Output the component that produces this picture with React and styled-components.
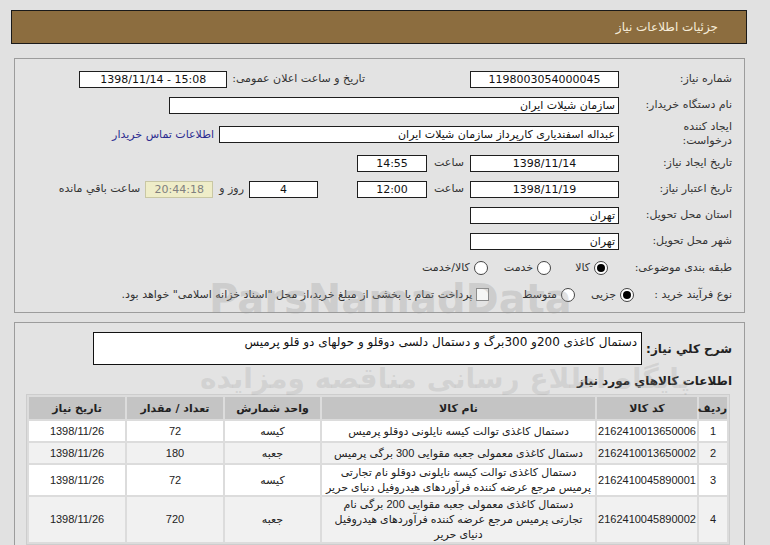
import React from "react";
import styled, { createGlobalStyle, css } from "styled-components";

const GlobalStyle = createGlobalStyle`
  html, body {
    margin: 0;
    padding: 0;
    background: #e1e1e1;
  }
  body {
    font-family: "DejaVu Sans", "Noto Sans", sans-serif;
    font-size: 11px;
    color: #222;
    direction: rtl;
  }
`;

const Page = styled.div`
  position: relative;
  width: 770px;
  height: 545px;
  overflow: hidden;
  box-sizing: border-box;
  padding: 10px 23px 0 11px;
`;

const Header = styled.div`
  height: 34px;
  box-sizing: border-box;
  display: flex;
  align-items: center;
  padding-right: 28px;
  background: #8c6d3f;
  border: 1px solid #1a1a1a;
  color: #f6ecd8;
  font-size: 12px;
`;

const Panel = styled.div`
  margin: ${(p) => p.$top || 14}px 2px 0 3px;
  border: 1px solid #9c9c9c;
  background: #e3e3e3;
  padding: ${(p) => p.$pad || "7px 12px 4px 8px"};
`;

const Row = styled.div`
  display: flex;
  align-items: center;
  height: ${(p) => p.$h || 26}px;
`;

const Label = styled.div`
  flex: none;
  width: ${(p) => (p.$w ? `${p.$w}px` : "auto")};
  margin-right: ${(p) => p.$mr || 0}px;
  color: #333;
  line-height: 14px;
  white-space: nowrap;
`;

const Field = styled.div`
  flex: none;
  width: ${(p) => p.$w}px;
  height: 17px;
  box-sizing: border-box;
  margin-right: ${(p) => p.$mr || 0}px;
  padding: 0 3px;
  border: 1px solid #1e1e1e;
  background: #fff;
  color: #111;
  line-height: 15px;
  text-align: ${(p) => (p.$right ? "right" : "center")};
  direction: ${(p) => (p.$right ? "rtl" : "ltr")};
  white-space: nowrap;
  overflow: hidden;
`;

const Timer = styled(Field)`
  background: #efedc8;
  border-color: #c9c7a4;
  color: #808080;
`;

const Link = styled.a`
  margin-right: 5px;
  color: #2b2b90;
  text-decoration: none;
  white-space: nowrap;
`;

const Option = styled.label`
  display: flex;
  align-items: center;
  gap: 4px;
  margin-right: ${(p) => p.$mr || 0}px;
  color: #333;
  white-space: nowrap;
`;

const Radio = styled.span`
  position: relative;
  flex: none;
  width: 14px;
  height: 14px;
  box-sizing: border-box;
  border-radius: 50%;
  border: 1px solid #444;
  background: #fff;
  ${(p) =>
    p.$checked &&
    css`
      &::after {
        content: "";
        position: absolute;
        inset: 2px;
        border-radius: 50%;
        background: #000;
      }
    `}
`;

const Check = styled.span`
  flex: none;
  width: 13px;
  height: 13px;
  box-sizing: border-box;
  border: 1px solid #8a8a8a;
  background: #f6f6f6;
`;

const DescRow = styled.div`
  display: flex;
  align-items: center;
`;

const BoldLabel = styled.div`
  flex: none;
  font-size: 12px;
  font-weight: bold;
  color: #222;
  white-space: nowrap;
`;

const DescBox = styled.div`
  flex: 1;
  height: 33px;
  box-sizing: border-box;
  margin: 0 4px 0 63px;
  padding: 2px 4px;
  border: 1px solid #111;
  background: #fff;
  color: #111;
  font-size: 12px;
  line-height: 15px;
`;

const SectionTitle = styled(BoldLabel)`
  margin: 7px 0 4px;
  line-height: 18px;
`;

const Table = styled.table`
  width: 701px;
  margin-right: 2px;
  border-collapse: separate;
  border-spacing: 2px;
  background: #dcdcdc;
  border: 1px solid #cdcdcd;
  table-layout: fixed;
  font-family: "Liberation Sans", "DejaVu Sans", sans-serif;
`;

const Th = styled.th`
  width: ${(p) => p.$w}px;
  height: 22px;
  padding: 0;
  background: #c4c4c4;
  color: #222;
  font-family: "DejaVu Sans", sans-serif;
  font-size: 11px;
  font-weight: bold;
  text-align: center;
`;

const Td = styled.td`
  height: ${(p) => p.$h || 20}px;
  padding: 0 1px;
  background: ${(p) => (p.$alt ? "#f1f1f1" : "#fff")};
  color: #222;
  font-size: 11px;
  line-height: 15px;
  text-align: center;
  direction: ${(p) => (p.$ltr ? "ltr" : "rtl")};
`;

const Watermark = styled.div`
  position: absolute;
  left: ${(p) => p.$x}px;
  top: ${(p) => p.$y}px;
  font-size: ${(p) => p.$size}px;
  font-weight: bold;
  color: rgba(150, 150, 150, ${(p) => p.$a || 0.3});
  white-space: nowrap;
  pointer-events: none;
  direction: ${(p) => (p.$ltr ? "ltr" : "rtl")};
`;

const items = [
  {
    id: 1,
    code: "2162410013650006",
    name: ["دستمال کاغذی توالت کیسه نایلونی دوقلو پرمیس"],
    unit: "کیسه",
    qty: 72,
    h: 20,
  },
  {
    id: 2,
    code: "2162410013650002",
    name: ["دستمال کاغذی معمولی جعبه مقوایی 300 برگی پرمیس"],
    unit: "جعبه",
    qty: 180,
    h: 20,
  },
  {
    id: 3,
    code: "2162410045890001",
    name: [
      "دستمال کاغذی توالت کیسه نایلونی دوقلو نام تجارتی",
      "پرمیس مرجع عرضه کننده فرآوردهای هیدروفیل دنیای حریر",
    ],
    unit: "کیسه",
    qty: 72,
    h: 28,
  },
  {
    id: 4,
    code: "2162410045890002",
    name: [
      "دستمال کاغذی معمولی جعبه مقوایی 200 برگی نام",
      "تجارتی پرمیس مرجع عرضه کننده فرآوردهای هیدروفیل",
      "دنیای حریر",
    ],
    unit: "جعبه",
    qty: 720,
    h: 44,
  },
];

export default function App() {
  return (
    <>
      <GlobalStyle />
      <Page>
        <Header>جزئیات اطلاعات نیاز</Header>

        <Panel>
          <Row>
            <Label $w={113}>شماره نیاز:</Label>
            <Field $w={149}>1198003054000045</Field>
            <Label $mr={105}>تاریخ و ساعت اعلان عمومی:</Label>
            <Field $w={148} $mr={5}>
              1398/11/14 - 15:08
            </Field>
          </Row>
          <Row>
            <Label $w={113}>نام دستگاه خریدار:</Label>
            <Field $w={450} $right>
              سازمان شیلات ایران
            </Field>
          </Row>
          <Row $h={32}>
            <Label $w={113}>
              ایجاد کننده
              <br />
              درخواست:
            </Label>
            <Field $w={400} $right>
              عبداله اسفندیاری کارپرداز سازمان شیلات ایران
            </Field>
            <Link href="#">اطلاعات تماس خریدار</Link>
          </Row>
          <Row>
            <Label $w={113}>تاریخ ایجاد نیاز:</Label>
            <Field $w={149}>1398/11/14</Field>
            <Label $w={35} $mr={6}>
              ساعت
            </Label>
            <Field $w={70} $mr={2}>
              14:55
            </Field>
          </Row>
          <Row>
            <Label $w={113}>تاریخ اعتبار نیاز:</Label>
            <Field $w={149}>1398/11/19</Field>
            <Label $w={35} $mr={6}>
              ساعت
            </Label>
            <Field $w={70} $mr={2}>
              12:00
            </Field>
            <Field $w={69} $mr={39}>
              4
            </Field>
            <Label $mr={5}>روز و</Label>
            <Timer $w={68} $mr={6}>
              20:44:18
            </Timer>
            <Label $mr={5}>ساعت باقي مانده</Label>
          </Row>
          <Row>
            <Label $w={113}>استان محل تحویل:</Label>
            <Field $w={149} $right>
              تهران
            </Field>
          </Row>
          <Row>
            <Label $w={113}>شهر محل تحویل:</Label>
            <Field $w={149} $right>
              تهران
            </Field>
          </Row>
          <Row $h={27}>
            <Label $w={112}>طبقه بندی موضوعی:</Label>
            <Option $mr={12}>
              <Radio $checked />
              کالا
            </Option>
            <Option $mr={24}>
              <Radio />
              خدمت
            </Option>
            <Option $mr={16}>
              <Radio />
              کالا/خدمت
            </Option>
          </Row>
          <Row $h={27}>
            <Label $w={98}>نوع فرآیند خرید :</Label>
            <Option>
              <Radio $checked />
              جزیی
            </Option>
            <Option $mr={16}>
              <Radio />
              متوسط
            </Option>
            <Option $mr={33}>
              <Check />
              پرداخت تمام یا بخشی از مبلغ خرید،از محل "اسناد خزانه اسلامی" خواهد بود.
            </Option>
          </Row>
        </Panel>

        <Panel $top={9} $pad="9px 12px 0 15px">
          <DescRow>
            <BoldLabel>شرح كلي نياز:</BoldLabel>
            <DescBox>
              دستمال کاغذی 200و 300برگ و دستمال دلسی دوقلو و حولهای دو قلو پرمیس
            </DescBox>
          </DescRow>
          <SectionTitle>اطلاعات كالاهاي مورد نياز</SectionTitle>
          <Table>
            <thead>
              <tr>
                <Th $w={28}>ردیف</Th>
                <Th $w={100}>کد کالا</Th>
                <Th $w={273}>نام کالا</Th>
                <Th $w={95}>واحد شمارش</Th>
                <Th $w={96}>تعداد / مقدار</Th>
                <Th $w={96}>تاریخ نیاز</Th>
              </tr>
            </thead>
            <tbody>
              {items.map((item, i) => (
                <tr key={item.id}>
                  <Td $h={item.h} $alt={i % 2 === 1}>
                    {item.id}
                  </Td>
                  <Td $alt={i % 2 === 1} $ltr>
                    {item.code}
                  </Td>
                  <Td $alt={i % 2 === 1}>
                    {item.name.map((line, j) => (
                      <React.Fragment key={j}>
                        {j > 0 && <br />}
                        {line}
                      </React.Fragment>
                    ))}
                  </Td>
                  <Td $alt={i % 2 === 1}>{item.unit}</Td>
                  <Td $alt={i % 2 === 1}>{item.qty}</Td>
                  <Td $alt={i % 2 === 1} $ltr>
                    1398/11/26
                  </Td>
                </tr>
              ))}
            </tbody>
          </Table>
        </Panel>

        <Watermark $x={209} $y={276} $size={40} $a={0.28} $ltr>
          ParsNamadData
        </Watermark>
        <Watermark $x={200} $y={362} $size={28} $a={0.22}>
          پایگاه اطلاع رسانی مناقصه ومزایده
        </Watermark>
      </Page>
    </>
  );
}
